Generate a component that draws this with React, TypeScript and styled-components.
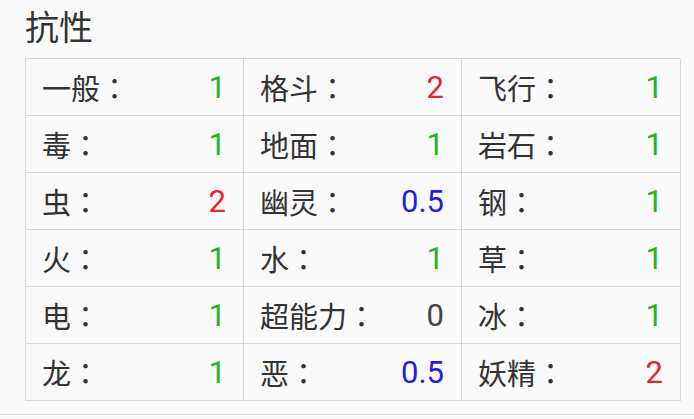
import styled, { createGlobalStyle } from 'styled-components'

const GlobalStyle = createGlobalStyle`
  html, body {
    margin: 0;
    padding: 0;
    background: #fafafa;
  }
  body {
    font-family: Roboto, "Noto Sans CJK SC", sans-serif;
    color: #333;
  }
`

const colors = {
  text: '#333333',
  border: '#d9d9d9',
  green: '#22b422',
  red: '#e6262b',
  blue: '#1f1fe0',
  gray: '#444444',
}

const Section = styled.section`
  height: 415px;
  padding: 0 14px 0 25px;
  border-bottom: 1px solid #dcdcdc;
  box-sizing: border-box;
`

const Title = styled.h2`
  margin: 0;
  height: 58px;
  font-size: 34px;
  font-weight: 400;
  line-height: 52px;
  font-family: "Noto Sans CJK SC", sans-serif;
  color: ${colors.text};
`

const Grid = styled.div`
  display: grid;
  grid-template-columns: 218px 218px 219px;
  grid-auto-rows: 57px;
  border-top: 1px solid ${colors.border};
  border-left: 1px solid ${colors.border};
  box-sizing: border-box;
`

const Cell = styled.div`
  display: flex;
  align-items: center;
  justify-content: space-between;
  padding: 0 17px 0 16px;
  border-right: 1px solid ${colors.border};
  border-bottom: 1px solid ${colors.border};
  box-sizing: border-box;
`

const Label = styled.span`
  font-family: "Noto Sans CJK SC", sans-serif;
  font-size: 29px;
  color: ${colors.text};
`

// centered full-width colon, as in the traditional/japanese forms
const Colon = styled.span`
  font-family: "Noto Sans CJK TC", "Noto Sans CJK JP", sans-serif;
`

const Value = styled.span<{ $tone: string }>`
  font-family: Roboto, sans-serif;
  font-size: 31px;
  color: ${(props) => props.$tone};
`

type Entry = [string, string]

const entries: Entry[] = [
  ['一般', '1'],
  ['格斗', '2'],
  ['飞行', '1'],
  ['毒', '1'],
  ['地面', '1'],
  ['岩石', '1'],
  ['虫', '2'],
  ['幽灵', '0.5'],
  ['钢', '1'],
  ['火', '1'],
  ['水', '1'],
  ['草', '1'],
  ['电', '1'],
  ['超能力', '0'],
  ['冰', '1'],
  ['龙', '1'],
  ['恶', '0.5'],
  ['妖精', '2'],
]

function toneOf(value: string) {
  if (value === '2') return colors.red
  if (value === '1') return colors.green
  if (value === '0.5') return colors.blue
  return colors.gray
}

function App() {
  return (
    <>
      <GlobalStyle />
      <Section>
        <Title>抗性</Title>
        <Grid>
          {entries.map(([name, value]) => (
            <Cell key={name}>
              <Label>
                {name}
                <Colon>：</Colon>
              </Label>
              <Value $tone={toneOf(value)}>{value}</Value>
            </Cell>
          ))}
        </Grid>
      </Section>
    </>
  )
}

export default App
